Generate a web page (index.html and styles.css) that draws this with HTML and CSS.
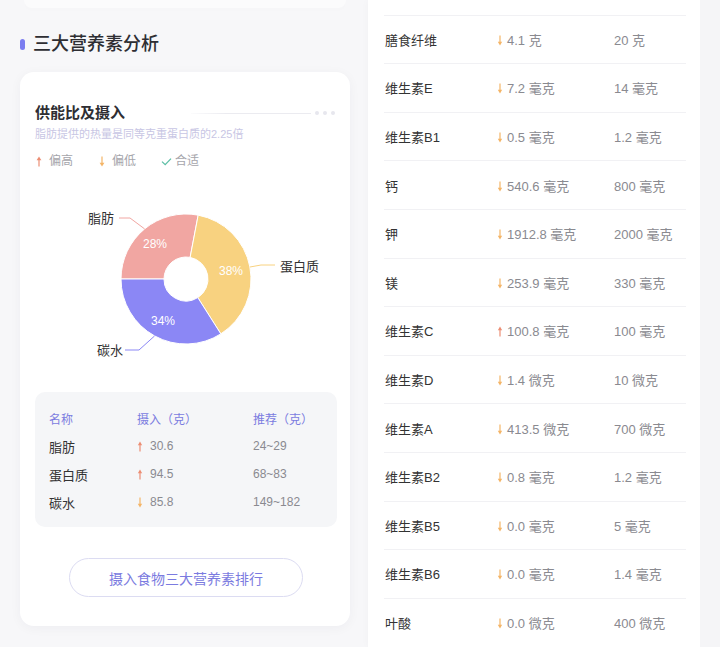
FILE: index.html
```html
<!DOCTYPE html>
<html lang="zh-CN">
<head>
<meta charset="utf-8">
<title>三大营养素分析</title>
<link rel="stylesheet" href="styles.css">
</head>
<body>
<div class="page">
  <div class="left">
    <div class="prev-card"></div>
    <h2 class="section-title"><span class="bullet"></span>三大营养素分析</h2>
    <div class="card">
      <div class="card-head">
        <h3 class="card-title">供能比及摄入</h3>
        <span class="head-line"></span>
        <span class="dots"><i></i><i></i><i></i></span>
      </div>
      <p class="subtitle">脂肪提供的热量是同等克重蛋白质的2.25倍</p>
      <div class="legend">
        <span class="legend-item">
          <svg class="arrow" width="8" height="11" viewBox="0 0 8 11"><path d="M4 10.5V2" stroke="#ec8e74" stroke-width="1.2"/><path d="M1.6 4.2L4 0.6L6.4 4.2Z" fill="#ec8e74"/></svg>偏高</span>
        <span class="legend-item">
          <svg class="arrow" width="8" height="11" viewBox="0 0 8 11"><path d="M4 0.5V9" stroke="#f4b567" stroke-width="1.2"/><path d="M1.6 6.8L4 10.4L6.4 6.8Z" fill="#f4b567"/></svg>偏低</span>
        <span class="legend-item">
          <svg class="check" width="11" height="11" viewBox="0 0 11 11"><path d="M1 5.6L4.2 8.6L10 2.6" fill="none" stroke="#5dbfa6" stroke-width="1.3"/></svg>合适</span>
      </div>
      <svg class="chart" width="300" height="200" viewBox="0 0 300 200">
        <path d="M86,104 A65,65 0 0 1 163.18,40.15 L155.12,82.39 A22,22 0 0 0 129,104 Z" fill="#f1a6a2" stroke="#fff" stroke-width="1"/>
        <path d="M163.18,40.15 A65,65 0 0 1 185.83,158.88 L162.79,122.58 A22,22 0 0 0 155.12,82.39 Z" fill="#f8d280" stroke="#fff" stroke-width="1"/>
        <path d="M185.83,158.88 A65,65 0 0 1 86,104 L129,104 A22,22 0 0 0 162.79,122.58 Z" fill="#8b87f5" stroke="#fff" stroke-width="1"/>
        <polyline points="109.6,53.9 95,43 84,43" fill="none" stroke="#f1a6a2" stroke-width="1"/>
        <polyline points="215,92 226,90 240,90" fill="none" stroke="#f8d280" stroke-width="1"/>
        <polyline points="119.5,161 104,175 90,175" fill="none" stroke="#8b87f5" stroke-width="1"/>
        <text class="pct" x="120" y="69">28%</text>
        <text class="pct" x="196" y="96">38%</text>
        <text class="pct" x="128" y="146">34%</text>
        <text class="lbl" x="53" y="43">脂肪</text>
        <text class="lbl" x="245" y="91">蛋白质</text>
        <text class="lbl" x="62" y="175">碳水</text>
      </svg>
      <div class="macro-table">
        <div class="mt-row mt-head"><span>名称</span><span>摄入（克）</span><span>推荐（克）</span></div>
        <div class="mt-row"><span class="nm">脂肪</span><span class="val"><svg class="arrow" width="6" height="11" viewBox="0 0 6 11"><path d="M3 10.5V2" stroke="#ec8e74" stroke-width="1.2"/><path d="M0.8 4.2L3 0.6L5.2 4.2Z" fill="#ec8e74"/></svg>30.6</span><span class="val">24~29</span></div>
        <div class="mt-row"><span class="nm">蛋白质</span><span class="val"><svg class="arrow" width="6" height="11" viewBox="0 0 6 11"><path d="M3 10.5V2" stroke="#ec8e74" stroke-width="1.2"/><path d="M0.8 4.2L3 0.6L5.2 4.2Z" fill="#ec8e74"/></svg>94.5</span><span class="val">68~83</span></div>
        <div class="mt-row"><span class="nm">碳水</span><span class="val"><svg class="arrow" width="6" height="11" viewBox="0 0 6 11"><path d="M3 0.5V9" stroke="#f4b567" stroke-width="1.2"/><path d="M0.8 6.8L3 10.4L5.2 6.8Z" fill="#f4b567"/></svg>85.8</span><span class="val">149~182</span></div>
      </div>
      <button class="rank-btn" type="button">摄入食物三大营养素排行</button>
    </div>
  </div>

  <div class="right">
    <div class="n-row"><span class="nm">膳食纤维</span><span class="val"><svg class="arrow" width="6" height="11" viewBox="0 0 6 11"><path d="M3 0.5V9" stroke="#f4b567" stroke-width="1.2"/><path d="M0.8 6.8L3 10.4L5.2 6.8Z" fill="#f4b567"/></svg>4.1 克</span><span class="val">20 克</span></div>
    <div class="n-row"><span class="nm">维生素E</span><span class="val"><svg class="arrow" width="6" height="11" viewBox="0 0 6 11"><path d="M3 0.5V9" stroke="#f4b567" stroke-width="1.2"/><path d="M0.8 6.8L3 10.4L5.2 6.8Z" fill="#f4b567"/></svg>7.2 毫克</span><span class="val">14 毫克</span></div>
    <div class="n-row"><span class="nm">维生素B1</span><span class="val"><svg class="arrow" width="6" height="11" viewBox="0 0 6 11"><path d="M3 0.5V9" stroke="#f4b567" stroke-width="1.2"/><path d="M0.8 6.8L3 10.4L5.2 6.8Z" fill="#f4b567"/></svg>0.5 毫克</span><span class="val">1.2 毫克</span></div>
    <div class="n-row"><span class="nm">钙</span><span class="val"><svg class="arrow" width="6" height="11" viewBox="0 0 6 11"><path d="M3 0.5V9" stroke="#f4b567" stroke-width="1.2"/><path d="M0.8 6.8L3 10.4L5.2 6.8Z" fill="#f4b567"/></svg>540.6 毫克</span><span class="val">800 毫克</span></div>
    <div class="n-row"><span class="nm">钾</span><span class="val"><svg class="arrow" width="6" height="11" viewBox="0 0 6 11"><path d="M3 0.5V9" stroke="#f4b567" stroke-width="1.2"/><path d="M0.8 6.8L3 10.4L5.2 6.8Z" fill="#f4b567"/></svg>1912.8 毫克</span><span class="val">2000 毫克</span></div>
    <div class="n-row"><span class="nm">镁</span><span class="val"><svg class="arrow" width="6" height="11" viewBox="0 0 6 11"><path d="M3 0.5V9" stroke="#f4b567" stroke-width="1.2"/><path d="M0.8 6.8L3 10.4L5.2 6.8Z" fill="#f4b567"/></svg>253.9 毫克</span><span class="val">330 毫克</span></div>
    <div class="n-row"><span class="nm">维生素C</span><span class="val"><svg class="arrow" width="6" height="11" viewBox="0 0 6 11"><path d="M3 10.5V2" stroke="#ec8e74" stroke-width="1.2"/><path d="M0.8 4.2L3 0.6L5.2 4.2Z" fill="#ec8e74"/></svg>100.8 毫克</span><span class="val">100 毫克</span></div>
    <div class="n-row"><span class="nm">维生素D</span><span class="val"><svg class="arrow" width="6" height="11" viewBox="0 0 6 11"><path d="M3 0.5V9" stroke="#f4b567" stroke-width="1.2"/><path d="M0.8 6.8L3 10.4L5.2 6.8Z" fill="#f4b567"/></svg>1.4 微克</span><span class="val">10 微克</span></div>
    <div class="n-row"><span class="nm">维生素A</span><span class="val"><svg class="arrow" width="6" height="11" viewBox="0 0 6 11"><path d="M3 0.5V9" stroke="#f4b567" stroke-width="1.2"/><path d="M0.8 6.8L3 10.4L5.2 6.8Z" fill="#f4b567"/></svg>413.5 微克</span><span class="val">700 微克</span></div>
    <div class="n-row"><span class="nm">维生素B2</span><span class="val"><svg class="arrow" width="6" height="11" viewBox="0 0 6 11"><path d="M3 0.5V9" stroke="#f4b567" stroke-width="1.2"/><path d="M0.8 6.8L3 10.4L5.2 6.8Z" fill="#f4b567"/></svg>0.8 毫克</span><span class="val">1.2 毫克</span></div>
    <div class="n-row"><span class="nm">维生素B5</span><span class="val"><svg class="arrow" width="6" height="11" viewBox="0 0 6 11"><path d="M3 0.5V9" stroke="#f4b567" stroke-width="1.2"/><path d="M0.8 6.8L3 10.4L5.2 6.8Z" fill="#f4b567"/></svg>0.0 毫克</span><span class="val">5 毫克</span></div>
    <div class="n-row"><span class="nm">维生素B6</span><span class="val"><svg class="arrow" width="6" height="11" viewBox="0 0 6 11"><path d="M3 0.5V9" stroke="#f4b567" stroke-width="1.2"/><path d="M0.8 6.8L3 10.4L5.2 6.8Z" fill="#f4b567"/></svg>0.0 毫克</span><span class="val">1.4 毫克</span></div>
    <div class="n-row"><span class="nm">叶酸</span><span class="val"><svg class="arrow" width="6" height="11" viewBox="0 0 6 11"><path d="M3 0.5V9" stroke="#f4b567" stroke-width="1.2"/><path d="M0.8 6.8L3 10.4L5.2 6.8Z" fill="#f4b567"/></svg>0.0 微克</span><span class="val">400 微克</span></div>
  </div>
  <div class="gutter"></div>
</div>
</body>
</html>
```

FILE: styles.css
```css
* { box-sizing: border-box; }
html, body {
  margin: 0;
  padding: 0;
  background: #f7f7f9;
  overflow: hidden;
  height: 647px;
}
body {
  font-family: "Liberation Sans", "Noto Sans CJK SC", sans-serif;
  color: #333;
}
.page {
  display: grid;
  grid-template-columns: 368px 332px 1fr;
  height: 647px;
}
.left {
  display: flex;
  flex-direction: column;
}
.prev-card {
  height: 8px;
  margin: 0 22px 0 24px;
  background: #fbfbfc;
  border-radius: 0 0 12px 12px;
  box-shadow: 0 2px 6px rgba(0, 0, 0, 0.012);
}
.section-title {
  margin: 24px 0 0 20px;
  display: flex;
  align-items: center;
  font-size: 18px;
  line-height: 24px;
  font-weight: 500;
  color: #2e2e33;
}
.bullet {
  width: 5px;
  height: 11px;
  border-radius: 3px;
  background: #7b7df0;
  margin-right: 8px;
}
.card {
  margin: 16px 18px 0 20px;
  background: #fff;
  border-radius: 14px;
  box-shadow: 0 2px 12px rgba(30, 30, 60, 0.045);
  padding: 31px 13px 29px 15px;
  display: flex;
  flex-direction: column;
}
.card-head {
  display: flex;
  align-items: center;
  height: 20px;
}
.card-title {
  margin: 0;
  font-size: 15px;
  line-height: 20px;
  font-weight: 700;
  color: #2e2e33;
}
.head-line {
  margin-left: auto;
  width: 120px;
  height: 1px;
  background: linear-gradient(to right, rgba(236, 236, 242, 0.2), #ebebf0 30%);
}
.dots {
  display: flex;
  gap: 4px;
  margin-left: 4px;
  margin-right: 2px;
}
.dots i {
  width: 4px;
  height: 4px;
  border-radius: 50%;
  background: #e7e7ee;
}
.subtitle {
  margin: 3px 0 0;
  font-size: 11px;
  line-height: 16px;
  color: #c8c6e4;
}
.legend {
  margin-top: 11px;
  display: flex;
  gap: 25px;
  font-size: 12px;
  line-height: 16px;
  color: #a5a5ab;
}
.legend-item {
  display: flex;
  align-items: center;
}
.legend-item .arrow {
  margin-right: 6px;
}
.legend-item .check {
  margin-right: 3px;
}
.chart {
  display: block;
  margin-top: 6px;
}
.chart .pct {
  font-size: 12px;
  fill: #fff;
  text-anchor: middle;
  dominant-baseline: central;
}
.chart .lbl {
  font-size: 13px;
  fill: #333;
  dominant-baseline: central;
}
.macro-table {
  margin-top: 17px;
  background: #f5f6f8;
  border-radius: 10px;
  padding: 12px 14px 11px;
  width: 302px;
}
.mt-row {
  display: grid;
  grid-template-columns: 88px 116px 1fr;
  height: 28px;
  align-items: center;
  font-size: 12px;
}
.mt-head {
  color: #7b7ce0;
}
.mt-row .nm {
  font-size: 13px;
  color: #333;
}
.mt-row .val {
  display: flex;
  align-items: center;
  color: #8a8a90;
}
.mt-row .arrow {
  margin-right: 7px;
}
.rank-btn {
  align-self: center;
  margin-top: 31px;
  width: 234px;
  height: 39px;
  border: 1px solid #dcdcf2;
  border-radius: 20px;
  background: #fff;
  color: #7b7be0;
  font-family: "Liberation Sans", "Noto Sans CJK SC", sans-serif;
  font-size: 14px;
  padding: 0;
}
.right {
  background: #fff;
  padding: 14.6px 14px 0 16px;
  box-shadow: 0 0 8px rgba(30, 30, 60, 0.03);
}
.n-row {
  display: grid;
  grid-template-columns: 112px 117px 1fr;
  height: 48.6px;
  align-items: center;
  border-top: 1px solid #f1f1f4;
  font-size: 13px;
  padding-left: 1px;
}
.n-row .nm {
  color: #333;
}
.n-row .val {
  display: flex;
  align-items: center;
  color: #8a8a90;
}
.n-row .arrow {
  margin-right: 4px;
  margin-top: 2px;
}
.gutter {
  background: #f5f5f7;
}
```
